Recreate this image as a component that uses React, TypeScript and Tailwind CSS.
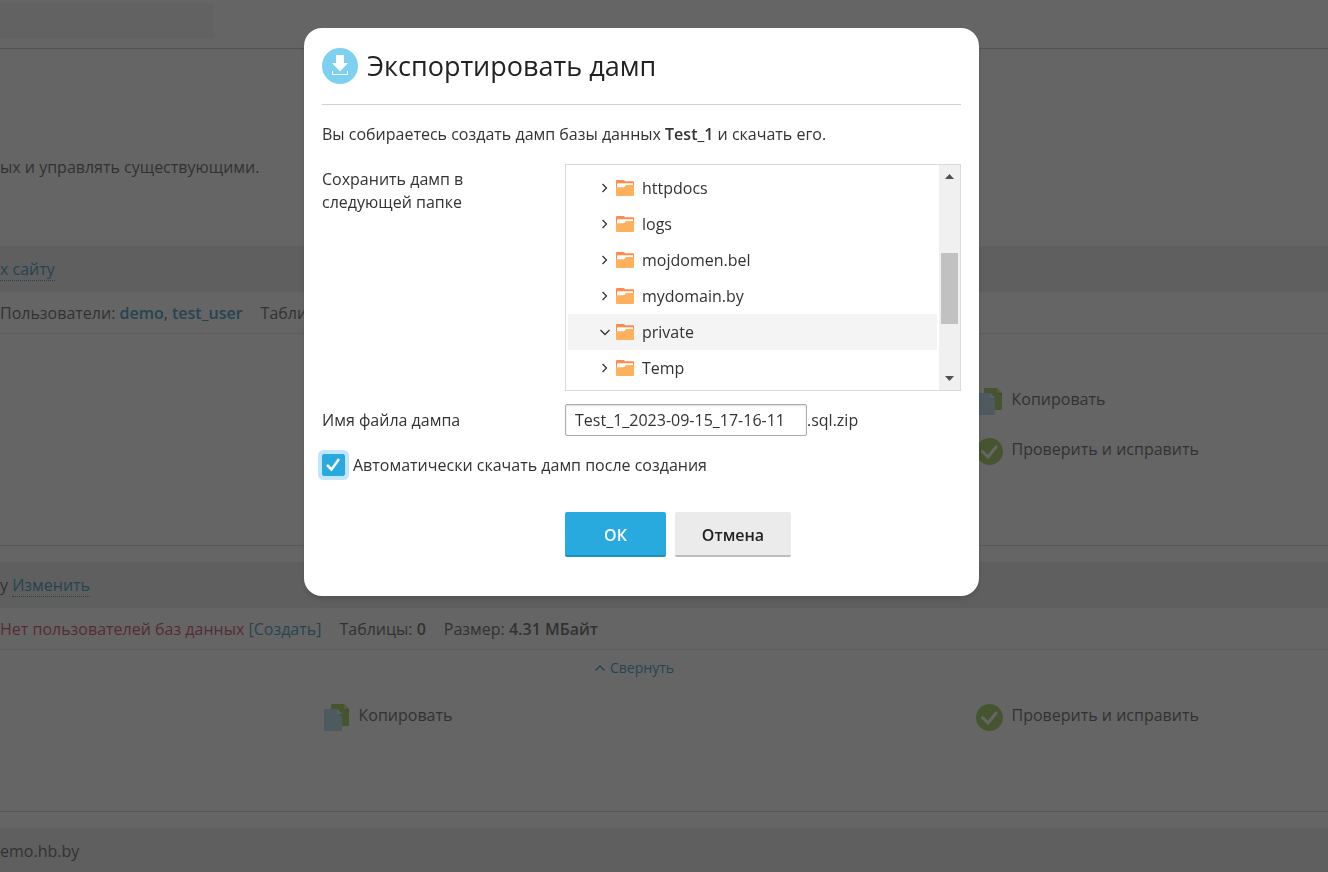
import { useState, type ReactNode } from "react"

const folders = [
  { name: "httpdocs" },
  { name: "logs" },
  { name: "mojdomen.bel" },
  { name: "mydomain.by" },
  { name: "private", open: true },
  { name: "Temp" }
]

function FolderIcon() {
  return (
    <svg width="18" height="16" viewBox="0 0 18 16" aria-hidden="true">
      <path d="M1 0h7l1 1.3h8a1 1 0 0 1 1 1V8H0V1a1 1 0 0 1 1-1z" fill="#ff8a4c" />
      <path d="M1 3.8 2 3h15v4H1z" fill="#ffe3d3" />
      <path d="M1 4h16v4H1z" fill="#fff" />
      <path
        d="M0 7.3h7.500c1.500 0 1.500-2.300 3-2.300H18v10a1 1 0 0 1-1 1H1a1 1 0 0 1-1-1z"
        fill="#ffb05c"
      />
    </svg>
  )
}

function Chevron({ direction }: { direction: "right" | "down" | "up" }) {
  const paths = {
    right: "M3.5 2 7.5 6 3.5 10",
    down: "M1.5 4 6 8.5 10.5 4",
    up: "M1.5 8.5 6 4 10.5 8.5"
  }
  return (
    <svg
      width="12"
      height="12"
      viewBox="0 0 12 12"
      fill="none"
      stroke="currentColor"
      strokeWidth="1.3"
      aria-hidden="true">
      <path d={paths[direction]} />
    </svg>
  )
}

function DownloadIcon() {
  return (
    <svg width="36" height="36" viewBox="0 0 36 36" aria-hidden="true">
      <circle cx="18" cy="18" r="18" fill="#7ed0f0" />
      <path d="M14 7h8v8h4l-8 8.500-8-8.500h4z" fill="#fff" />
      <path d="M10.500 23v3.500h15V23" fill="none" stroke="#fff" />
    </svg>
  )
}

function CopyIcon() {
  return (
    <svg width="27" height="27" viewBox="0 0 27 27" aria-hidden="true">
      <path d="M9 0h12l5 5v15.500a1.500 1.500 0 0 1-1.500 1.500H9a1 1 0 0 1-1-1V1a1 1 0 0 1 1-1z" fill="#84be2e" />
      <path d="M21 0v4a1 1 0 0 0 1 1h4z" fill="#b5dc7c" />
      <path d="M22 5h4v4z" fill="#5f9a24" />
      <path d="M2 5h12l5 5v15.500a1.500 1.500 0 0 1-1.500 1.500h-15A1.500 1.500 0 0 1 1 25.500V6a1 1 0 0 1 1-1z" fill="#a5d4ec" />
      <path d="M14 5v4a1 1 0 0 0 1 1h4z" fill="#d8eef8" />
      <path d="M15 10h4v4z" fill="#7fb9d6" />
    </svg>
  )
}

function CheckIcon() {
  return (
    <svg width="27" height="27" viewBox="0 0 27 27" aria-hidden="true">
      <circle cx="13.500" cy="13.500" r="13.500" fill="#84be2e" />
      <path
        d="M6.500 13.500 12 19 20 9"
        fill="none"
        stroke="#fff"
        strokeWidth="3"
        strokeLinecap="round"
        strokeLinejoin="round"
      />
    </svg>
  )
}

function Tool({ icon, label, className }: { icon: ReactNode; label: string; className: string }) {
  return (
    <button type="button" className={"flex items-start gap-[9px] text-left leading-[22px] " + className}>
      {icon}
      <span>{label}</span>
    </button>
  )
}

type DatabaseProps = {
  title: ReactNode
  info: ReactNode
  collapsible?: boolean
  children: ReactNode
}

function Database({ title, info, collapsible, children }: DatabaseProps) {
  return (
    <section className="mb-4 border-b border-[#d0d0d0] pb-20">
      <div className="flex h-[46px] items-center bg-[#e6e6e6]">
        <p>{title}</p>
      </div>
      <div className="flex h-[42px] items-center gap-[18px] border-b border-[#dedede]">{info}</div>
      <div className="flex h-[54px] items-start justify-center pr-[60px] pt-2">
        {collapsible ? (
          <button type="button" className="flex items-center gap-1 text-sm text-[#007bb0]">
            <Chevron direction="up" />
            Свернуть
          </button>
        ) : null}
      </div>
      <div className="-ml-1 mr-[26px] grid grid-cols-4 gap-y-[23px]">{children}</div>
    </section>
  )
}

function DatabasesPage() {
  return (
    <div className="h-screen overflow-hidden whitespace-nowrap bg-white">
      <header className="border-b border-[#b4b4b4] pb-[9px] pt-[3px] shadow-xs">
        <div className="h-9 w-[214px] rounded-r-sm bg-[#f4f4f4]" />
      </header>
      <p className="mt-[106px] pb-[67px]">ых и управлять существующими.</p>
      <Database
        title={
          <a href="#site" className="border-b border-dotted border-[#007bb0] text-[#007bb0]">
            х сайту
          </a>
        }
        info={
          <>
            <span>
              Пользователи:{" "}
              <a href="#demo" className="font-semibold text-[#007bb0]">demo</a>,{" "}
              <a href="#test_user" className="font-semibold text-[#007bb0]">test_user</a>
            </span>
            <span>Таблицы:</span>
          </>
        }>
        <Tool icon={<CopyIcon />} label="Копировать" className="col-start-4" />
        <Tool icon={<CheckIcon />} label="Проверить и исправить" className="col-start-4" />
      </Database>
      <Database
        collapsible
        title={
          <>
            у{" "}
            <a href="#change" className="border-b border-dotted border-[#007bb0] text-[#007bb0]">
              Изменить
            </a>
          </>
        }
        info={
          <>
            <span className="text-[#c8103c]">
              Нет пользователей баз данных{" "}
              <a href="#create" className="text-[#007bb0]">[Создать]</a>
            </span>
            <span>
              Таблицы: <b className="font-semibold">0</b>
            </span>
            <span>
              Размер: <b className="font-semibold">4.31 МБайт</b>
            </span>
          </>
        }>
        <Tool icon={<CopyIcon />} label="Копировать" className="col-start-2" />
        <Tool icon={<CheckIcon />} label="Проверить и исправить" className="col-start-4" />
      </Database>
      <div className="flex h-[46px] items-center bg-[#e6e6e6]">emo.hb.by</div>
    </div>
  )
}

function FolderTree() {
  const [selected, setSelected] = useState("private")

  return (
    <div className="flex border border-[#dadada]">
      <ul className="grow px-0.5 pb-1 pt-[5px]">
        {folders.map((folder) => (
          <li key={folder.name}>
            <button
              type="button"
              onClick={() => setSelected(folder.name)}
              className={
                "flex h-9 w-full items-center pl-[31px] text-left " +
                (selected === folder.name ? "bg-[#f4f4f4]" : "")
              }>
              <Chevron direction={folder.open ? "down" : "right"} />
              <span className="ml-[5px] mr-2">
                <FolderIcon />
              </span>
              {folder.name}
            </button>
          </li>
        ))}
      </ul>
      <div className="flex w-[21px] flex-col items-center bg-[#f0f0f0] py-[9px]">
        <svg width="9" height="5" viewBox="0 0 9 5" aria-hidden="true">
          <path d="M0 5 4.500 0 9 5z" fill="#505050" />
        </svg>
        <div className="mt-[74px] h-[71px] w-[17px] bg-[#c1c1c1]" />
        <svg className="mt-auto" width="9" height="5" viewBox="0 0 9 5" aria-hidden="true">
          <path d="M0 0 4.500 5 9 0z" fill="#505050" />
        </svg>
      </div>
    </div>
  )
}

function ExportDialog() {
  const [fileName, setFileName] = useState("Test_1_2023-09-15_17-16-11")
  const [autoDownload, setAutoDownload] = useState(true)

  return (
    <form
      role="dialog"
      aria-labelledby="dialog-title"
      onSubmit={(e) => e.preventDefault()}
      className="w-full max-w-[675px] rounded-[18px] bg-white px-[18px] pb-[39px] pt-5 shadow-md">
      <div className="flex items-center gap-[9px] border-b border-[#d0d0da] pb-5">
        <DownloadIcon />
        <h1 id="dialog-title" className="text-[27px] leading-9 text-[#222]">
          Экспортировать дамп
        </h1>
      </div>
      <p className="mt-[17px]">
        Вы собираетесь создать дамп базы данных <b className="font-semibold">Test_1</b> и скачать его.
      </p>
      <div className="mt-[18px] grid grid-cols-[243px_1fr] gap-y-[13px]">
        <p className="w-44 pt-1 leading-[23px]">Сохранить дамп в следующей папке</p>
        <FolderTree />
        <label htmlFor="file-name" className="leading-8">
          Имя файла дампа
        </label>
        <div className="flex items-center">
          <input
            id="file-name"
            type="text"
            value={fileName}
            onChange={(e) => setFileName(e.target.value)}
            className="h-8 w-[242px] rounded-xs border border-[#ababab] px-[9px] shadow-[inset_0_1px_2px_#ddd] outline-none"
          />
          .sql.zip
        </div>
      </div>
      <label className="mt-[17px] flex items-center gap-2">
        <span className="grid">
          <input
            type="checkbox"
            checked={autoDownload}
            onChange={(e) => setAutoDownload(e.target.checked)}
            className="col-start-1 row-start-1 h-[22px] w-[23px] appearance-none rounded-xs border border-[#28aade] ring-4 ring-[#c2e6ff] checked:bg-[#28aade]"
          />
          {autoDownload ? (
            <svg
              className="pointer-events-none col-start-1 row-start-1"
              width="23"
              height="22"
              viewBox="0 0 23 22"
              fill="none"
              stroke="#fff"
              strokeWidth="2.500"
              aria-hidden="true">
              <path d="M5 11 9.500 15.500 17 5" />
            </svg>
          ) : null}
        </span>
        Автоматически скачать дамп после создания
      </label>
      <div className="ml-[243px] mt-[35px] flex gap-[9px] font-semibold">
        <button
          type="submit"
          className="h-[45px] min-w-[101px] rounded-xs border-b-2 border-[#1f8fc0] bg-[#28aade] pt-0.5 text-white">
          ОК
        </button>
        <button type="button" className="h-[45px] min-w-[116px] rounded-xs border-b-2 border-[#bdbdbd] bg-[#ebebeb] pt-0.5 text-[#222]">
          Отмена
        </button>
      </div>
    </form>
  )
}

export default function App() {
  return (
    <div className="font-['Open_Sans',sans-serif] text-base text-[#333]">
      <DatabasesPage />
      <div className="fixed inset-0 flex items-start justify-center overflow-auto bg-[rgb(50_50_50/0.75)] pr-[45px] pt-7">
        <ExportDialog />
      </div>
    </div>
  )
}
